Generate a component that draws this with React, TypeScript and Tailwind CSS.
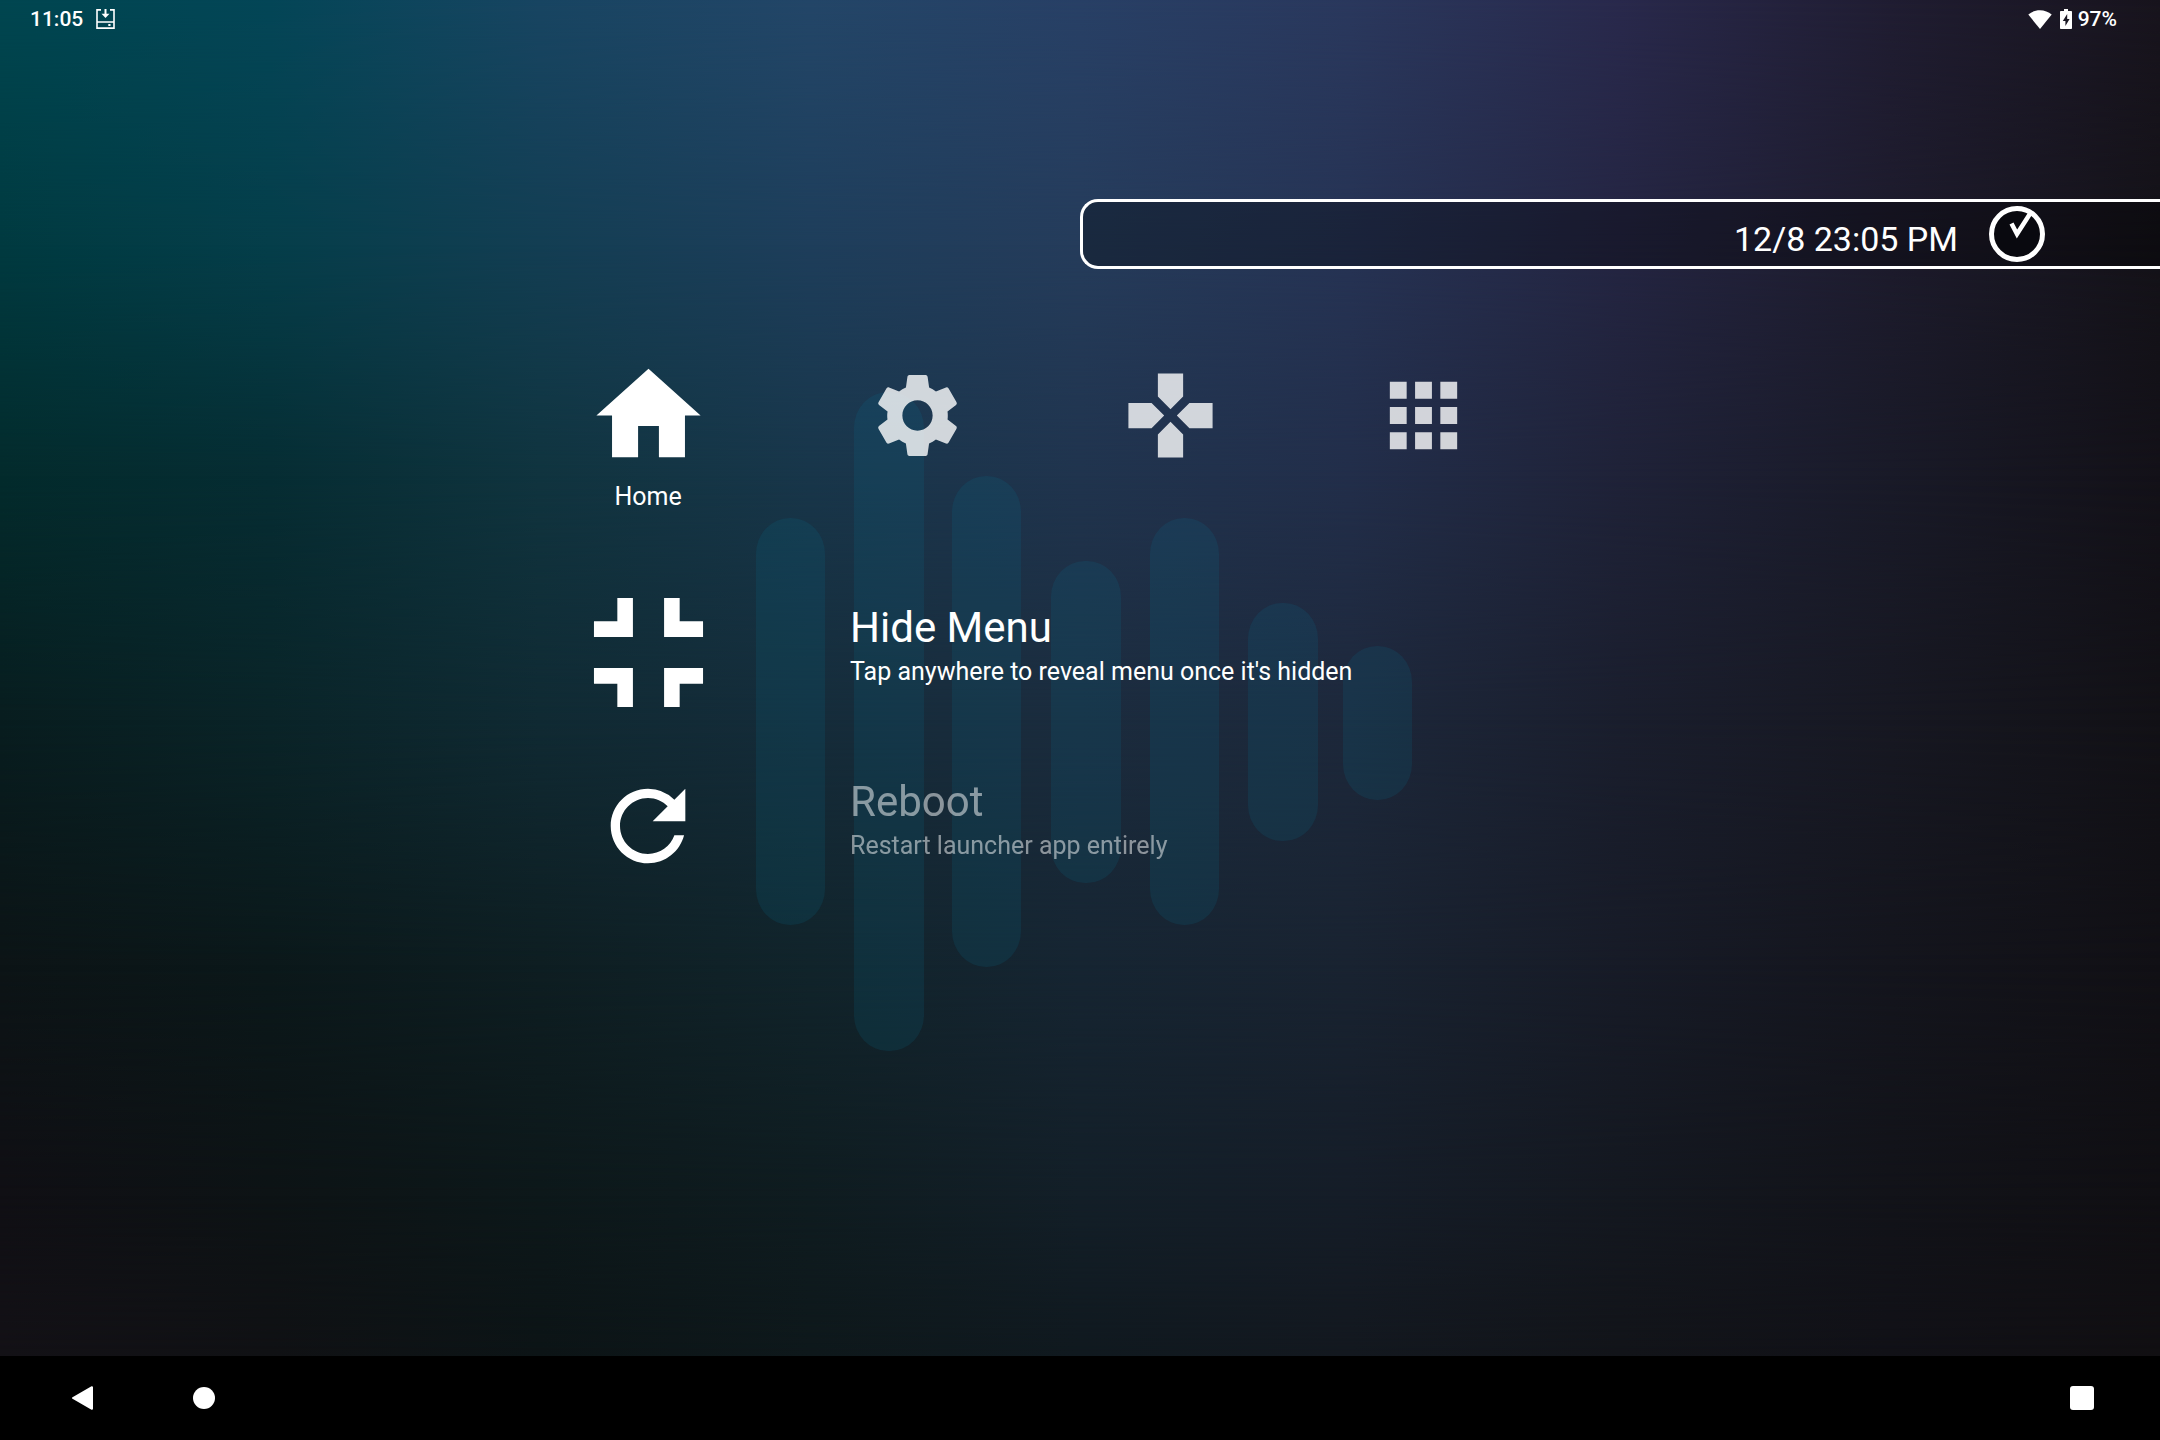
import React from 'react';
import { MdApps, MdFullscreenExit, MdGamepad, MdHome, MdRefresh, MdSettings } from 'react-icons/md';

const bars = [
  { x: 756, y: 518, w: 69, h: 407 },
  { x: 854, y: 392, w: 70, h: 659 },
  { x: 952, y: 476, w: 69, h: 491 },
  { x: 1051, y: 561, w: 70, h: 322 },
  { x: 1150, y: 518, w: 69, h: 407 },
  { x: 1248, y: 603, w: 70, h: 238 },
  { x: 1343, y: 646, w: 69, h: 154 },
];

function Wallpaper() {
  return (
    <div aria-hidden="true" className="absolute inset-0 -z-10 overflow-hidden">
      <div className="absolute inset-0 bg-[linear-gradient(to_right,#004650,#044657,#184562,#234668,#284066,#2a385d,#29294c,#201d32,#18141d)]" />
      <div className="absolute inset-0 bg-[linear-gradient(to_right,#003a40,#053e4a,#133e53,#1e3e5b,#253c5b,#263354,#242542,#1d1b2c,#141218)] [mask-image:linear-gradient(to_bottom,transparent_0%,black_17%)]" />
      <div className="absolute inset-0 bg-[linear-gradient(to_right,#032b2c,#062d33,#10343f,#18364a,#20344e,#222e4a,#1f2238,#191a28,#131118)] [mask-image:linear-gradient(to_bottom,transparent_17%,black_33%)]" />
      <div className="absolute inset-0 bg-[linear-gradient(to_right,#081d1f,#0a2428,#102a33,#152c3a,#1b2c3e,#1d283b,#1a1e2d,#171822,#121116)] [mask-image:linear-gradient(to_bottom,transparent_33%,black_50%)]" />
      <div className="absolute inset-0 bg-[linear-gradient(to_right,#0c1416,#0b181a,#0e1e22,#11242b,#162532,#192331,#171b27,#14151d,#111015)] [mask-image:linear-gradient(to_bottom,transparent_50%,black_67%)]" />
      <div className="absolute inset-0 bg-[linear-gradient(to_right,#100f14,#0d1315,#0d181a,#0f1c20,#131f28,#151d28,#141820,#121319,#100f13)] [mask-image:linear-gradient(to_bottom,transparent_67%,black_83%)]" />
      <div className="absolute inset-0 bg-[linear-gradient(to_right,#131116,#101114,#0c1416,#0e181b,#10191f,#13181f,#121419,#111117,#110f12)] [mask-image:linear-gradient(to_bottom,transparent_83%,black_94%)]" />
      <svg viewBox="0 0 2160 1440" preserveAspectRatio="xMidYMid slice" className="absolute inset-0 size-full">
        {bars.map((b) => (
          <rect key={b.x} x={b.x} y={b.y} width={b.w} height={b.h} rx={34} ry={36} fill="#08789c" fillOpacity={0.15} />
        ))}
      </svg>
    </div>
  );
}

function StatusBar() {
  return (
    <header className="flex h-[38px] items-center justify-between pr-[43px] pl-[30px] text-[21px] leading-6 font-medium">
      <div className="flex items-center gap-[13px]">
        <time>11:05</time>
        <svg viewBox="0 0 19 20" className="h-5 w-[19px]" fill="none" stroke="currentColor" strokeWidth="1.6">
          <path d="M5 .9H1v18.2h17V.9h-4M1 13h17" />
          <path d="M9.500 0v6" strokeWidth="2" />
          <path d="M5.500 4.800h8l-4 4.200z" fill="currentColor" stroke="none" />
          <path d="M12.300 15h2.200v2h-2.200z" fill="currentColor" stroke="none" />
        </svg>
      </div>
      <div className="flex items-center">
        <svg viewBox="0 0 24 19" className="h-[19px] w-6" fill="currentColor">
          <path d="M12 19 .3 4.600C3.500 1.800 7.600.2 12 .2s8.500 1.600 11.700 4.400z" />
        </svg>
        <svg viewBox="0 0 12 20" className="ml-2 h-5 w-3" fill="currentColor" fillRule="evenodd">
          <path d="M4 0h4v2h3.200c.5 0 .8.3.8.8v16.400c0 .5-.3.800-.8.800H.8c-.5 0-.8-.3-.8-.8V2.800C0 2.300.3 2 .8 2H4zM7.200 5 2.800 12h2.600v5l4.200-7H7.200z" />
        </svg>
        <span className="ml-1.5">97%</span>
      </div>
    </header>
  );
}

function ClockPill() {
  return (
    <div className="mt-[161px] ml-[50%] flex h-[70px] items-center justify-end gap-[31px] rounded-l-[18px] border-3 border-r-0 border-white bg-black/30 pr-[115px]">
      <time className="pt-2.5 text-[34px] leading-10">12/8 23:05 PM</time>
      <svg viewBox="0 0 56 56" className="size-14" fill="none" stroke="#fff">
        <circle cx="28" cy="28" r="25.500" strokeWidth="5" fill="#09090f" />
        <path d="M22.500 17.500 28 28 41.500 7" strokeWidth="4.500" />
      </svg>
    </div>
  );
}

const tabs = [
  { label: 'Settings', Icon: MdSettings },
  { label: 'Games', Icon: MdGamepad },
  { label: 'Apps', Icon: MdApps },
];

function Tabs() {
  return (
    <nav className="mt-[84px] flex items-start gap-[152px]">
      <button type="button" aria-current="page" className="flex w-[134px] flex-col items-center gap-[3px]">
        <MdHome className="size-[125px]" />
        <span className="text-[25px] leading-8">Home</span>
      </button>
      {tabs.map(({ label, Icon }) => (
        <button key={label} type="button" aria-label={label} className="flex h-[125px] items-center opacity-80">
          <Icon className="size-[101px]" />
        </button>
      ))}
    </nav>
  );
}

type MenuItemProps = { title: string; detail: string; active?: boolean; children: React.ReactNode };

function MenuItem({ title, detail, active, children }: MenuItemProps) {
  return (
    <li>
      <button type="button" className="flex h-[174px] items-center gap-[135px] text-left">
        <span className="flex w-[134px] justify-center">{children}</span>
        <span className={active ? 'flex flex-col gap-1 pb-3' : 'flex flex-col gap-1 pb-3 opacity-50'}>
          <span className="text-[42px] leading-12">{title}</span>
          <span className="text-[25px] leading-8">{detail}</span>
        </span>
      </button>
    </li>
  );
}

function SystemNav() {
  return (
    <nav className="flex h-[84px] items-center bg-black pr-[66px] pl-[70px]">
      <button type="button" aria-label="Back">
        <svg viewBox="0 0 24 24" className="size-6" fill="currentColor" stroke="currentColor" strokeLinejoin="round" strokeWidth="2">
          <path d="M22 1.200v21.600L3 12z" />
        </svg>
      </button>
      <button type="button" aria-label="Home screen" className="ml-[99px] size-[22px] rounded-full bg-white" />
      <button type="button" aria-label="Recent apps" className="ml-auto size-6 rounded-[3px] bg-white" />
    </nav>
  );
}

export default function App() {
  return (
    <div className="relative isolate flex min-h-screen flex-col font-[Roboto,sans-serif] text-white">
      <Wallpaper />
      <StatusBar />
      <main className="flex-1">
        <ClockPill />
        <div className="pl-[26.9%]">
          <Tabs />
          <ul className="mt-[52px]">
            <MenuItem title="Hide Menu" detail="Tap anywhere to reveal menu once it's hidden" active>
              <MdFullscreenExit className="size-[187px] shrink-0" />
            </MenuItem>
            <MenuItem title="Reboot" detail="Restart launcher app entirely">
              <MdRefresh className="size-28 shrink-0" />
            </MenuItem>
          </ul>
        </div>
      </main>
      <SystemNav />
    </div>
  );
}
